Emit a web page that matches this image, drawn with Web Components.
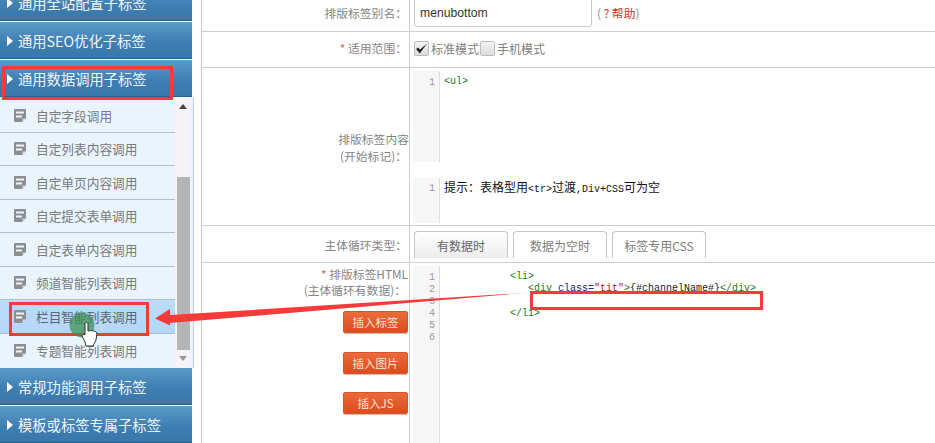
<!DOCTYPE html>
<html lang="zh">
<head>
<meta charset="utf-8">
<title>标签管理</title>
<style>
  html, body { margin: 0; height: 443px; overflow: hidden; background: #fff; }
  body { font-family: "Noto Sans CJK SC", "Liberation Sans", sans-serif; }
</style>
</head>
<body>
<tag-page>
  <side-nav slot="side">
    <nav-head style="height:36px;margin-top:-15px;padding-top:0">通用全站配置子标签</nav-head>
    <nav-head>通用SEO优化子标签</nav-head>
    <nav-head>通用数据调用子标签</nav-head>
    <nav-list>
      <nav-item>自定字段调用</nav-item>
      <nav-item>自定列表内容调用</nav-item>
      <nav-item>自定单页内容调用</nav-item>
      <nav-item>自定提交表单调用</nav-item>
      <nav-item>自定表单内容调用</nav-item>
      <nav-item>频道智能列表调用</nav-item>
      <nav-item active>栏目智能列表调用</nav-item>
      <nav-item last>专题智能列表调用</nav-item>
    </nav-list>
    <nav-head>常规功能调用子标签</nav-head>
    <nav-head>模板或标签专属子标签</nav-head>
  </side-nav>

  <form-table slot="main">
    <form-row style="height:31px">
      <span slot="label" style="padding-right:2px;padding-bottom:6px">排版标签别名：</span>
      <text-box value="menubottom"></text-box>
    </form-row>
    <form-row style="height:35px">
      <span slot="label" style="padding-right:2px;padding-bottom:4px"><b style="color:#e8574a;font-weight:400">* </b>适用范围：</span>
      <check-opt checked>标准模式</check-opt><check-opt>手机模式</check-opt>
    </form-row>
    <form-row style="height:157px" top-pad="3">
      <span slot="label">排版标签内容<br><span style="padding-right:2px">(开始标记)：</span></span>
      <code-box style="height:91px;margin-bottom:16px" lines="1"><span class="g">&lt;ul&gt;</span></code-box>
      <code-box style="height:45px" lines="1" dark><span class="h">提示：表格型用</span>&lt;tr&gt;<span class="h">过渡</span>,Div+CSS<span class="h">可为空</span></code-box>
    </form-row>
    <form-row style="height:36px" top-pad="5">
      <span slot="label" style="padding-right:2px">主体循环类型：</span>
      <tab-strip></tab-strip>
    </form-row>
    <form-row style="height:181px" top-pad="3" label-top>
      <div slot="label" style="padding-right:1px">
        <div style="line-height:16px"><b style="color:#e8574a;font-weight:400">* </b>排版标签HTML<br><span style="padding-right:2px">(主体循环有数据)：</span></div>
        <div style="margin-top:13px"><orange-btn>插入标签</orange-btn></div>
        <div style="margin-top:19px"><orange-btn>插入图片</orange-btn></div>
        <div style="margin-top:18px"><orange-btn>插入JS</orange-btn></div>
      </div>
      <code-box style="height:178px" lines="6"><span class="g">           &lt;li&gt;</span>
<span class="g">              &lt;div </span><span class="n">class=</span><span class="r">"tit"</span><span class="g">&gt;</span>{#channelName#}<span class="g">&lt;/div&gt;</span>

<span class="g">           &lt;/li&gt;</span></code-box>
    </form-row>
  </form-table>
</tag-page>
<mark-layer></mark-layer>

<script>
class TagPage extends HTMLElement {
  constructor() {
    super();
    this.attachShadow({ mode: "open" });
    this.shadowRoot.innerHTML = `
      <style>
        :host { display: flex; width: 935px; height: 443px; overflow: hidden; }
        .side { flex: 0 0 194px; }
        .gap { flex: 0 0 7px; }
        .main { flex: 1; min-width: 0; }
      </style>
      <div class="side"><slot name="side"></slot></div>
      <div class="gap"></div>
      <div class="main"><slot name="main"></slot></div>
    `;
  }
}

class SideNav extends HTMLElement {
  constructor() {
    super();
    this.attachShadow({ mode: "open" });
    this.shadowRoot.innerHTML = `
      <style>
        :host { display: flex; flex-direction: column; width: 194px; }
      </style>
      <slot></slot>
    `;
  }
}

class NavHead extends HTMLElement {
  constructor() {
    super();
    this.attachShadow({ mode: "open" });
    this.shadowRoot.innerHTML = `
      <style>
        :host {
          display: flex; align-items: center; box-sizing: border-box;
          width: 192px; height: 37px; margin-bottom: 1px; flex: none;
          padding-left: 7px; padding-top: 1px; gap: 5px;
          background: linear-gradient(#5c9ac8, #3f7fb3 55%, #3a77a9);
          border-bottom: 1px solid #27628f;
          color: #eef6fc; font-size: 14.3px; line-height: 20px;
        }
        i { width: 0; height: 0; border-left: 6px solid #fff; border-top: 5px solid transparent; border-bottom: 5px solid transparent; }
      </style>
      <i></i><span><slot></slot></span>
    `;
  }
}

class NavList extends HTMLElement {
  constructor() {
    super();
    this.attachShadow({ mode: "open" });
    this.shadowRoot.innerHTML = `
      <style>
        :host {
          display: flex; box-sizing: border-box; width: 194px; height: 271px;
          margin-top: -1px; flex: none;
          background: #e9f4fe; border-right: 1px solid #c3d0dc;
        }
        .items { width: 175px; flex: none; padding-top: 2px; }
        .bar { width: 15px; flex: none; background: #f6f2f8; display: flex; flex-direction: column; align-items: center; }
        .up, .down { width: 0; height: 0; border-left: 4px solid transparent; border-right: 4px solid transparent; flex: none; }
        .up { border-bottom: 5px solid #444; margin-top: 7px; }
        .thumb { width: 13px; height: 173px; background: #b5b5b5; margin-top: 68px; flex: none; margin-left: 1px; }
        .down { border-top: 5px solid #999; margin-top: 6px; }
      </style>
      <div class="items"><slot></slot></div>
      <div class="bar"><div class="up"></div><div class="thumb"></div><div class="down"></div></div>
    `;
  }
}

class NavItem extends HTMLElement {
  constructor() {
    super();
    this.attachShadow({ mode: "open" });
    this.shadowRoot.innerHTML = `
      <style>
        :host {
          display: flex; align-items: center; box-sizing: border-box;
          height: 33.5px; padding-left: 13px; gap: 9px;
          color: #7a7a7a; font-size: 12.7px;
          border-bottom: 1px solid #b4bec6;
        }
        :host([active]) { background: linear-gradient(#bcdcfa, #b4d6f8); color: #5d6670; }
        :host([last]) { border-bottom: 0; }
        svg { flex: none; }
      </style>
      <svg width="14" height="15" viewBox="0 0 14 15">
        <path d="M2 1h10a1 1 0 0 1 1 1v8l-4 4H2a1 1 0 0 1-1-1V2a1 1 0 0 1 1-1z" fill="#8b8f92"/>
        <path d="M3 3.5h8v2H3zM3 7.5h6v2H3z" fill="#eef3f7"/>
        <path d="M9.5 14v-3.5H13z" fill="#d0d4d8"/>
      </svg>
      <span><slot></slot></span>
    `;
  }
}

class FormTable extends HTMLElement {
  constructor() {
    super();
    this.attachShadow({ mode: "open" });
    this.shadowRoot.innerHTML = `
      <style>
        :host { display: block; border-left: 1px solid #c9c9c9; height: 443px; box-sizing: border-box; }
      </style>
      <slot></slot>
    `;
  }
}

class FormRow extends HTMLElement {
  constructor() {
    super();
    this.attachShadow({ mode: "open" });
    this.shadowRoot.innerHTML = `
      <style>
        :host {
          display: flex; border-bottom: 1px solid #cfcfcf;
          color: #858585; font-size: 11.8px; line-height: 17px;
        }
        :host(:last-child) { border-bottom: 0; }
        .label {
          flex: 0 0 208px; box-sizing: border-box; border-right: 1px solid #cfcfcf;
          display: flex; align-items: center; justify-content: flex-end; text-align: right;
        }
        :host([label-top]) .label { align-items: flex-start; padding-top: 3px; }
        .value { flex: 1; min-width: 0; padding-left: 3px; box-sizing: border-box; display: block; }
        .inner { display: flex; flex-wrap: wrap; align-content: center; height: 100%; }
        :host([top-pad]) .inner { display: block; height: auto; }
      </style>
      <div class="label"><slot name="label"></slot></div>
      <div class="value"><div class="inner"><slot></slot></div></div>
    `;
    const pad = this.getAttribute("top-pad");
    if (pad) this.shadowRoot.querySelector(".value").style.paddingTop = pad + "px";
  }
}

class TextBox extends HTMLElement {
  constructor() {
    super();
    this.attachShadow({ mode: "open" });
    this.shadowRoot.innerHTML = `
      <style>
        :host { display: flex; align-items: flex-start; gap: 5px; margin: -5px 0 0 1px; height: 32px; }
        .box {
          width: 178px; height: 30px; box-sizing: border-box; padding: 2px 5px 0;
          border: 1px solid #c9c9c9; border-radius: 3px; background: #fff;
          font: 12.2px/24px "Liberation Sans", sans-serif; color: #333;
          display: flex; align-items: center;
        }
        .help { font-size: 11.8px; color: #8a8a8a; line-height: 32px; }
        .help b { font-weight: 400; color: #d8312a; }
      </style>
      <div class="box"></div>
      <div class="help">( <b>? 帮助</b>)</div>
    `;
    this.shadowRoot.querySelector(".box").textContent = this.getAttribute("value");
  }
}

class CheckOpt extends HTMLElement {
  constructor() {
    super();
    this.attachShadow({ mode: "open" });
    this.shadowRoot.innerHTML = `
      <style>
        :host { display: inline-flex; align-items: center; color: #808080; font-size: 12px; gap: 2px; margin: -3px 0 0 1px; }
        .c {
          width: 15px; height: 15px; box-sizing: border-box; border: 1px solid #bcbcbc; border-radius: 2px;
          background: linear-gradient(#f3f3f3, #dcdcdc); display: flex; align-items: center; justify-content: center;
        }
      </style>
      <div class="c"></div><span><slot></slot></span>
    `;
    if (this.hasAttribute("checked")) {
      this.shadowRoot.querySelector(".c").innerHTML =
        '<svg width="13" height="13" viewBox="0 0 12 12"><path d="M1 6.5l3.4 4L11 1.5 4.6 7 2.6 5z" fill="#222"/></svg>';
    }
  }
}

class CodeBox extends HTMLElement {
  constructor() {
    super();
    const root = this.attachShadow({ mode: "open" });
    const count = Number(this.getAttribute("lines")) || 1;
    let nums = "";
    for (let i = 1; i <= count; i++) nums += i + "\n";
    root.innerHTML = `
      <style>
        :host { display: flex; overflow: hidden; }
        .gut {
          width: 22px; flex: none; background: #f6f6f6; border-right: 1px solid #dedede;
          padding-right: 4px; text-align: right; color: #999; margin: 0;
          font: 10px/12px "Liberation Mono", monospace; padding-top: 6px; white-space: pre;
        }
        :host([dark]) .gut { padding-top: 5px; }
        .code {
          margin: 0; padding: 5px 0 0 4px; white-space: pre; color: #222;
          font: 10px/12.3px "Liberation Mono", "Noto Sans CJK SC", monospace;
        }
        :host([dark]) .code { line-height: 14px; padding-top: 2px; color: #111; }
        .h { font: 12px/14px "Noto Sans CJK SC", sans-serif; }
        .g { color: #1a7a1a; }
        .n { color: #1a1a8a; }
        .r { color: #a11; }
      </style>
      <pre class="gut"></pre>
      <pre class="code"></pre>
    `;
    root.querySelector(".gut").textContent = nums;
    root.querySelector(".code").innerHTML = this.innerHTML;
  }
}

class TabStrip extends HTMLElement {
  constructor() {
    super();
    this.attachShadow({ mode: "open" });
    this.shadowRoot.innerHTML = `
      <style>
        :host { display: flex; gap: 5px; height: 27px; margin-left: 1px; }
        div {
          width: 94px; box-sizing: border-box; height: 27px;
          border: 1px solid #c6c6c6; border-bottom: 0; border-radius: 4px 4px 0 0;
          display: flex; align-items: center; justify-content: center;
          color: #7c7c7c; font-size: 12px; background: #fff;
        }
        div.on { background: linear-gradient(#fff, #ececec); color: #666; }
      </style>
      <div class="on">有数据时</div><div>数据为空时</div><div>标签专用CSS</div>
    `;
  }
}

class OrangeBtn extends HTMLElement {
  constructor() {
    super();
    this.attachShadow({ mode: "open" });
    this.shadowRoot.innerHTML = `
      <style>
        :host {
          display: inline-flex; align-items: center; justify-content: center;
          width: 65px; height: 22px; box-sizing: border-box; border-radius: 2px;
          background: linear-gradient(#ec6a3c, #dc4c1e);
          border: 1px solid #d4552c; box-shadow: 0 1px 1px #d9b3a5;
          color: #fbe3d8; font-size: 11.5px; line-height: 14px;
        }
      </style>
      <slot></slot>
    `;
  }
}

class MarkLayer extends HTMLElement {
  constructor() {
    super();
    this.attachShadow({ mode: "open" });
    this.shadowRoot.innerHTML = `
      <style>
        :host { position: absolute; left: 0; top: 0; width: 935px; height: 443px; pointer-events: none; display: block; }
        .box { position: absolute; box-sizing: border-box; border: 3px solid #f53a3a; }
        svg { position: absolute; left: 0; top: 0; }
      </style>
      <div class="box" style="left:2px;top:66px;width:171px;height:34px"></div>
      <div class="box" style="left:9px;top:302px;width:140px;height:34px"></div>
      <div class="box" style="left:530px;top:291px;width:233px;height:19px"></div>
      <svg width="935" height="443" viewBox="0 0 935 443">
        <circle cx="82" cy="325" r="12.5" fill="#3a8f50" fill-opacity=".72"/>
        <path d="M530 292.5 170 315V309L155 318.5 170 325.5V323Z" fill="#f53a3a"/>
        <path d="M85 324c0-2 3-2 3 0v7c3-1 8 0 9 2l-1 7-3 6H86l-1-4-3-6c0-2 2-2 3-1z" fill="#fff" stroke="#333" stroke-width="1"/>
      </svg>
    `;
  }
}

customElements.define("tag-page", TagPage);
customElements.define("side-nav", SideNav);
customElements.define("nav-head", NavHead);
customElements.define("nav-list", NavList);
customElements.define("nav-item", NavItem);
customElements.define("form-table", FormTable);
customElements.define("form-row", FormRow);
customElements.define("text-box", TextBox);
customElements.define("check-opt", CheckOpt);
customElements.define("code-box", CodeBox);
customElements.define("tab-strip", TabStrip);
customElements.define("orange-btn", OrangeBtn);
customElements.define("mark-layer", MarkLayer);
</script>
</body>
</html>
